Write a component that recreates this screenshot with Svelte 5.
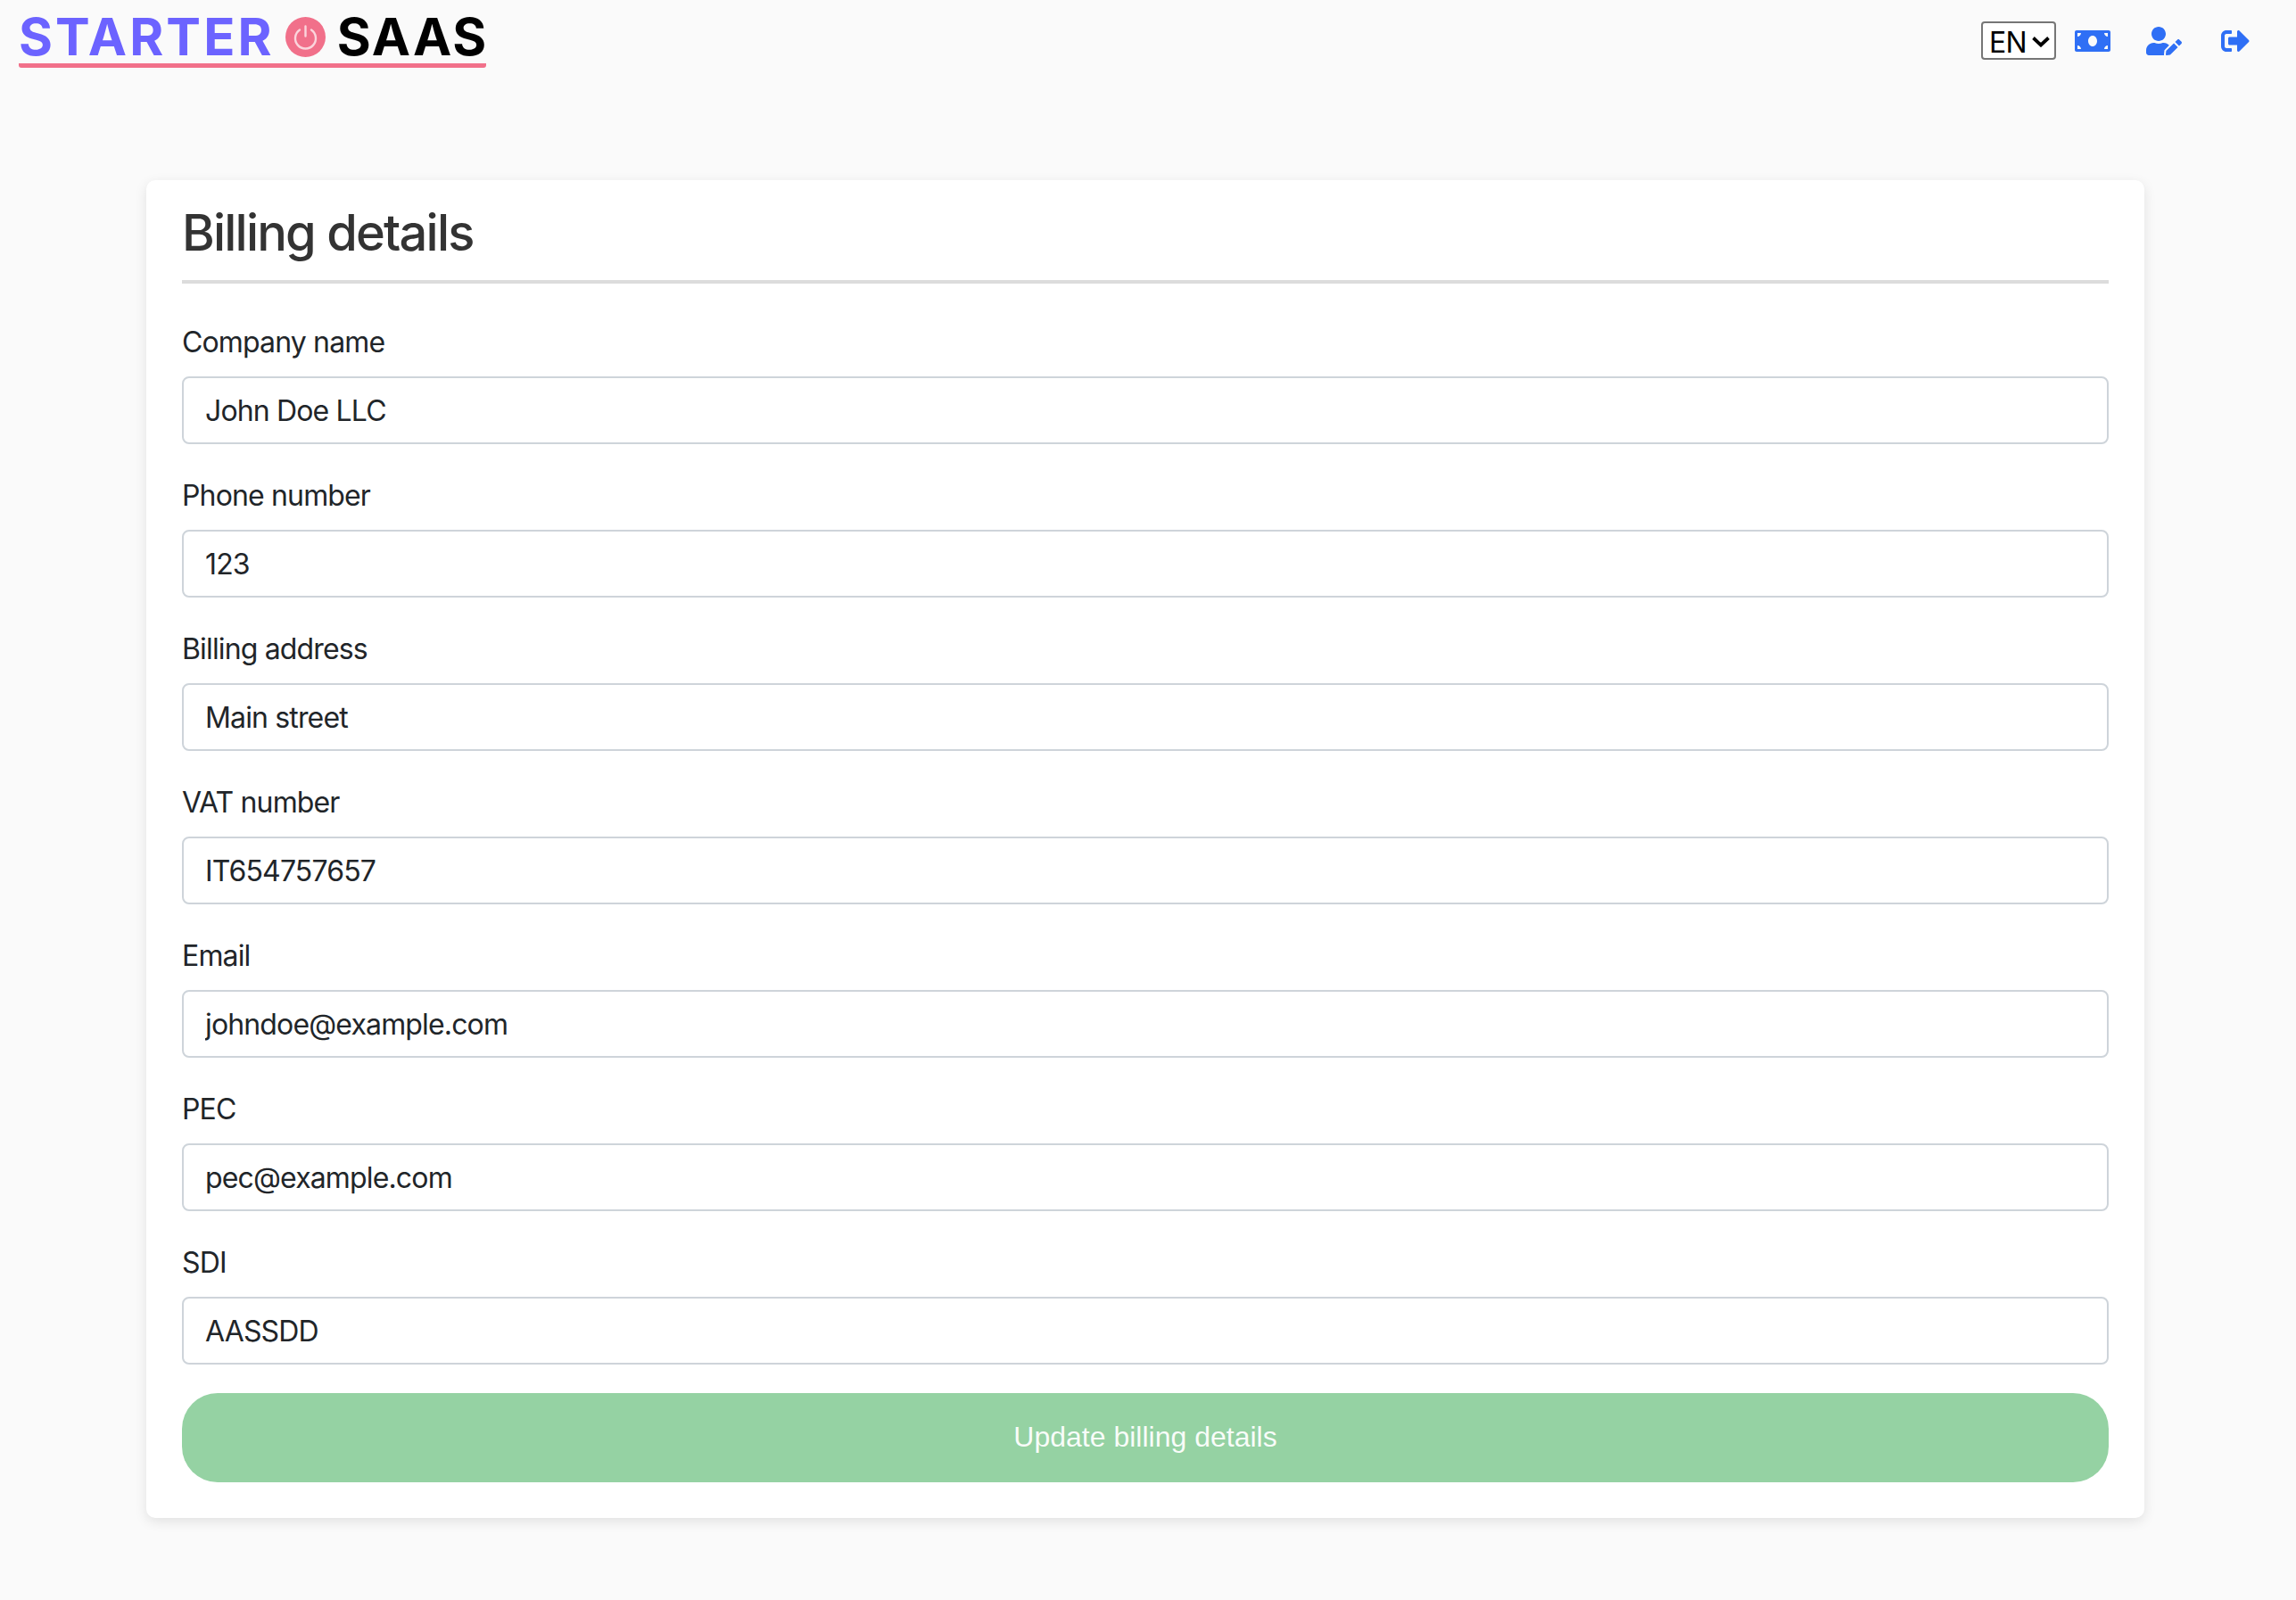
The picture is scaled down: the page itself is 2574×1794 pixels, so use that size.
<script>
	const fields = [
		{ label: 'Company name', value: 'John Doe LLC' },
		{ label: 'Phone number', value: '123' },
		{ label: 'Billing address', value: 'Main street' },
		{ label: 'VAT number', value: 'IT654757657' },
		{ label: 'Email', value: 'johndoe@example.com' },
		{ label: 'PEC', value: 'pec@example.com' },
		{ label: 'SDI', value: 'AASSDD' }
	];
</script>

<header class="topbar">
	<a class="logo" href="#home">
		<span class="logo-starter">STARTER</span>
		<svg class="logo-power" viewBox="0 0 45 45" aria-hidden="true">
			<circle cx="22.5" cy="22.5" r="22.5" fill="#f1708a" />
			<path d="M16 14.5a11.5 11.5 0 1 0 13 0M22.5 10.5v11" fill="none" stroke="#fbd5dc" stroke-width="2.4" stroke-linecap="round" />
		</svg>
		<span class="logo-saas">SAAS</span>
	</a>

	<nav class="nav">
		<div class="lang">
			<select aria-label="Language">
				<option>EN</option>
				<option>IT</option>
			</select>
			<svg class="lang-arrow" viewBox="0 0 20 12" aria-hidden="true">
				<path d="M1.5 1.5 10 9.5l8.5-8" fill="none" stroke="#000" stroke-width="3.8" />
			</svg>
		</div>
		<a class="nav-icon bill" href="#plans" aria-label="Plans">
			<svg viewBox="0 0 640 512"><path d="M608 64H32C14.33 64 0 78.33 0 96v320c0 17.67 14.33 32 32 32h576c17.67 0 32-14.33 32-32V96c0-17.67-14.33-32-32-32zM48 400v-64c35.35 0 64 28.65 64 64H48zm0-224v-64h64c0 35.35-28.65 64-64 64zm272 176c-44.19 0-80-42.99-80-96 0-53.02 35.82-96 80-96s80 42.98 80 96c0 53.03-35.83 96-80 96zm272 48h-64c0-35.35 28.65-64 64-64v64zm0-224c-35.35 0-64-28.65-64-64h64v64z" /></svg>
		</a>
		<a class="nav-icon user" href="#profile" aria-label="Profile">
			<svg viewBox="0 0 640 512"><path d="M224 256c70.7 0 128-57.3 128-128S294.7 0 224 0 96 57.3 96 128s57.3 128 128 128zm89.6 32h-16.7c-22.2 10.2-46.9 16-72.9 16s-50.6-5.8-72.9-16h-16.7C60.2 288 0 348.2 0 422.4V464c0 26.5 21.5 48 48 48h274.9c-2.4-6.8-3.4-14-2.6-21.3l6.8-60.9 1.2-11.1 7.9-7.9 77.3-77.3c-24.5-27.7-60-45.5-99.9-45.5zm45.3 145.3l-6.8 61c-1.1 10.2 7.5 18.8 17.6 17.6l60.9-6.8 137.9-137.9-71.7-71.7-137.9 137.8zM633 268.9L595.1 231c-9.3-9.3-24.5-9.3-33.8 0l-37.8 37.8-4.1 4.1 71.8 71.7 41.8-41.8c9.3-9.4 9.3-24.5 0-33.9z" /></svg>
		</a>
		<a class="nav-icon logout" href="#logout" aria-label="Log out">
			<svg viewBox="0 0 512 512"><path d="M497 273L329 441c-15 15-41 4.5-41-17v-96H152c-13.3 0-24-10.7-24-24v-96c0-13.3 10.7-24 24-24h136V88c0-21.4 25.9-32 41-17l168 168c9.3 9.4 9.3 24.6 0 34zM192 436v-40c0-6.6-5.4-12-12-12H96c-17.7 0-32-14.3-32-32V160c0-17.7 14.3-32 32-32h84c6.6 0 12-5.4 12-12V76c0-6.6-5.4-12-12-12H96c-53 0-96 43-96 96v192c0 53 43 96 96 96h84c6.6 0 12-5.4 12-12z" /></svg>
		</a>
	</nav>
</header>

<main class="page">
	<section class="card">
		<h1>Billing details</h1>
		<form>
			{#each fields as field}
				<label class="field">
					<span>{field.label}</span>
					<input type="text" value={field.value} />
				</label>
			{/each}
			<button type="submit" disabled>Update billing details</button>
		</form>
	</section>
</main>

<style>
	:global(body) {
		background: #fafafa;
		color: #212529;
		font-family: Inter, 'Liberation Sans', sans-serif;
	}

	.topbar {
		display: flex;
		align-items: flex-start;
		justify-content: space-between;
		height: 202px;
		padding: 0 52px 0 21px;
		box-sizing: border-box;
	}

	.logo {
		display: flex;
		align-items: center;
		gap: 12px;
		height: 50px;
		margin-top: 16px;
		padding-bottom: 5px;
		border-bottom: 5px solid #f1708a;
		border-radius: 3px;
		font-size: 58px;
		font-weight: 700;
		letter-spacing: 3.1px;
		line-height: 50px;
		text-decoration: none;
	}

	.logo-starter {
		color: #6c63ff;
	}

	.logo-saas {
		margin-right: -2px;
		margin-left: 1px;
		color: #000;
		letter-spacing: 2px;
	}

	.logo-power {
		width: 45px;
		height: 45px;
		flex: none;
	}

	.nav {
		display: flex;
		align-items: flex-start;
		padding-top: 24px;
	}

	.lang {
		position: relative;
		width: 84px;
		height: 43px;
		margin-right: 21px;
	}

	.lang select {
		appearance: none;
		display: block;
		width: 100%;
		height: 100%;
		box-sizing: border-box;
		padding: 2px 0 0 7px;
		background: #fff;
		border: 2px solid #767676;
		border-radius: 4px;
		color: #000;
		font-family: Inter, sans-serif;
		font-size: 32px;
		letter-spacing: -0.8px;
	}

	.lang-arrow {
		position: absolute;
		top: 17px;
		right: 7px;
		width: 20px;
		height: 12px;
		pointer-events: none;
	}

	.nav-icon {
		display: block;
		height: 32px;
		margin-top: 6px;
		color: #2f6ff5;
	}

	.nav-icon svg {
		display: block;
		height: 32px;
		fill: currentColor;
	}

	.bill {
		width: 40px;
	}

	.user {
		width: 40px;
		margin-left: 40px;
	}

	.logout {
		width: 32px;
		margin-left: 44px;
	}

	.page {
		padding: 0 170px 92px 164px;
	}

	.card {
		padding: 25px 40px 40px;
		background: #fff;
		border-radius: 10px;
		box-shadow: 0 4px 14px rgba(0, 0, 0, 0.1);
	}

	h1 {
		margin: 0 0 48px;
		padding-bottom: 19px;
		border-bottom: 4px solid #dcdcdc;
		color: #333;
		font-size: 56px;
		font-weight: 550;
		letter-spacing: -1.8px;
		line-height: 68px;
	}

	.field {
		display: block;
		margin-bottom: 40px;
		font-size: 32px;
		letter-spacing: -0.85px;
	}

	.field:nth-last-child(2) {
		margin-bottom: 32px;
	}

	.field span {
		display: block;
		margin-bottom: 20px;
		line-height: 36px;
	}

	input {
		display: block;
		width: 100%;
		height: 76px;
		box-sizing: border-box;
		padding: 0 24px;
		background: #fff;
		border: 2px solid #ced4da;
		border-radius: 8px;
		color: #212529;
		font-family: inherit;
		font-size: 32px;
		letter-spacing: -0.85px;
	}

	button {
		display: block;
		width: 100%;
		height: 100px;
		padding: 0 0 2px;
		background: #95d2a3;
		border: 0;
		border-radius: 40px;
		color: rgba(255, 255, 255, 0.95);
		font-family: 'Liberation Sans', Arial, sans-serif;
		font-size: 32px;
	}
</style>
